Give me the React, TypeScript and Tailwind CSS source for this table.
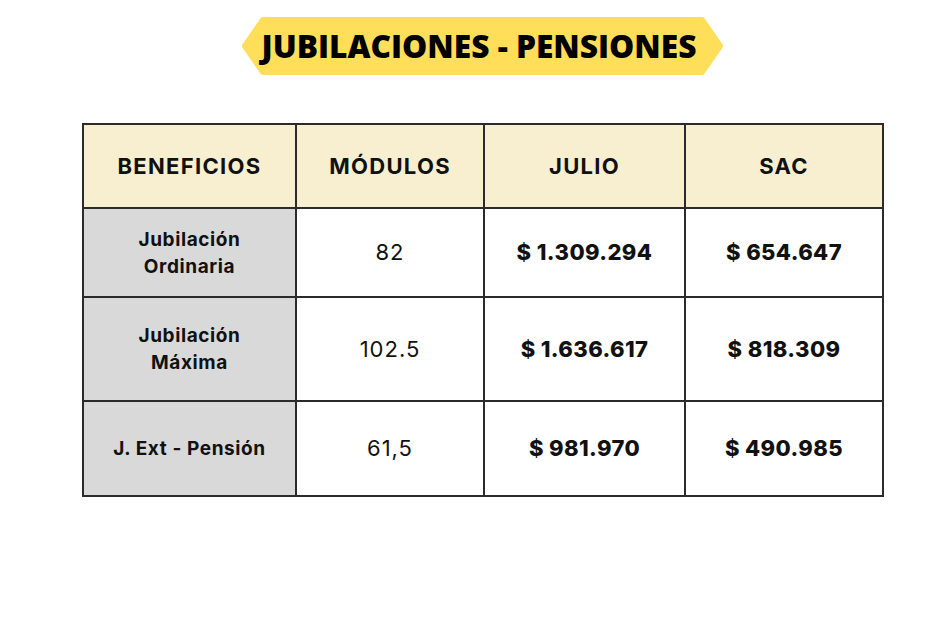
const rows = [
  { name: ['Jubilación', 'Ordinaria'], mod: '82', julio: '$ 1.309.294', sac: '$ 654.647', h: 'h-[89px]' },
  { name: ['Jubilación', 'Máxima'], mod: '102.5', julio: '$ 1.636.617', sac: '$ 818.309', h: 'h-[104px]' },
  { name: ['J. Ext - Pensión'], mod: '61,5', julio: '$ 981.970', sac: '$ 490.985', h: 'h-[95px]' },
]

function TitleBadge() {
  return (
    <div className="relative ml-[242px] mt-[17px] flex h-[58px] w-[481px] items-center justify-center">
      <svg className="absolute inset-0" width="481" height="58" viewBox="0 0 481 58">
        <polygon
          points="3,29 21,3 460,3 478,29 460,55 21,55"
          fill="#ffde59"
          stroke="#ffde59"
          strokeWidth="6"
          strokeLinejoin="round"
        />
      </svg>
      <h1 className="relative mr-[7px] text-[31.7px] font-extrabold text-black [font-family:'Open_Sans',sans-serif]">
        JUBILACIONES - PENSIONES
      </h1>
    </div>
  )
}

export default function App() {
  return (
    <div className="h-[630px] w-[950px] overflow-hidden bg-white [font-family:Inter,sans-serif] text-[#111]">
      <TitleBadge />
      <table className="ml-[82px] mt-[48px] w-[800px] table-fixed border-collapse border-2 border-[#2b2b2b]">
        <colgroup>
          <col className="w-[213px]" />
          <col className="w-[188px]" />
          <col className="w-[201px]" />
          <col className="w-[198px]" />
        </colgroup>
        <thead>
          <tr className="h-[84px] bg-[#f8efd0] text-[22px] font-extrabold tracking-[1.3px]">
            <th className="border-2 border-[#2b2b2b]">BENEFICIOS</th>
            <th className="border-2 border-[#2b2b2b]">MÓDULOS</th>
            <th className="border-2 border-[#2b2b2b]">JULIO</th>
            <th className="border-2 border-[#2b2b2b]">SAC</th>
          </tr>
        </thead>
        <tbody>
          {rows.map((r) => (
            <tr key={r.mod} className={r.h}>
              <td className="border-2 border-[#2b2b2b] bg-[#d9d9d9] text-center text-[19px] font-bold leading-[27px] tracking-[0.6px]">
                {r.name.map((n) => (
                  <div key={n}>{n}</div>
                ))}
              </td>
              <td className="border-2 border-[#2b2b2b] text-center text-[22px] tracking-[1px]">{r.mod}</td>
              <td className="border-2 border-[#2b2b2b] text-center text-[22px] font-extrabold tracking-[0.4px]">{r.julio}</td>
              <td className="border-2 border-[#2b2b2b] text-center text-[22px] font-extrabold tracking-[0.4px]">{r.sac}</td>
            </tr>
          ))}
        </tbody>
      </table>
    </div>
  )
}
